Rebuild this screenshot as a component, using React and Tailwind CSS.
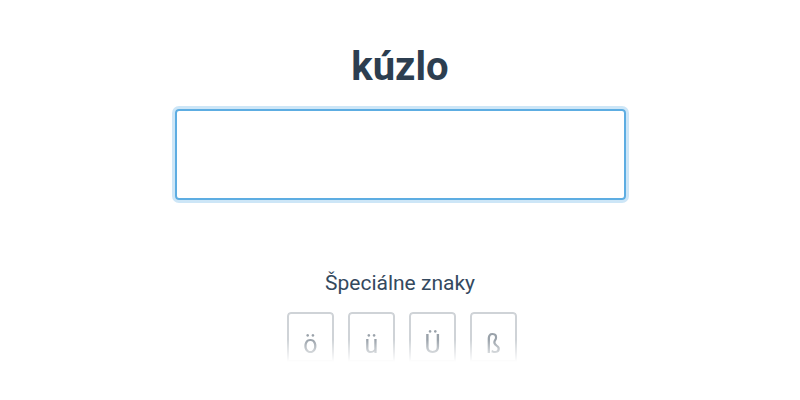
export default function App() {
  const chars = ["ö", "ü", "Ü", "ß"];

  return (
    <div className="min-h-[400px] bg-white font-['Roboto',sans-serif] flex flex-col items-center">
      {/* Word */}
      <h1 className="mt-[43px] text-[40px] leading-[48px] font-bold text-[#2c3e50]">kúzlo</h1>

      {/* Answer field */}
      <input
        type="text"
        className="mt-[18px] w-[451px] h-[91px] rounded-[4px] border-2 border-[#5dade2] ring-[3px] ring-[#cde6f7] outline-none px-3 text-2xl text-[#2c3e50] text-center"
      />

      {/* Special characters */}
      <p className="mt-[69px] text-[21px] leading-[28px] text-[#34495e]">Špeciálne znaky</p>
      <div className="mt-[15px] ml-[4px] flex gap-[14px]">
        {chars.map(c => (
          <button
            key={c}
            className="w-[47px] h-[50px] border-2 border-[#cfd3d7] rounded-t-[4px] text-[25px] leading-none text-[#9aa2aa] pt-[14px] [mask-image:linear-gradient(to_bottom,black_55%,transparent_100%)]"
          >
            {c}
          </button>
        ))}
      </div>
    </div>
  );
}
